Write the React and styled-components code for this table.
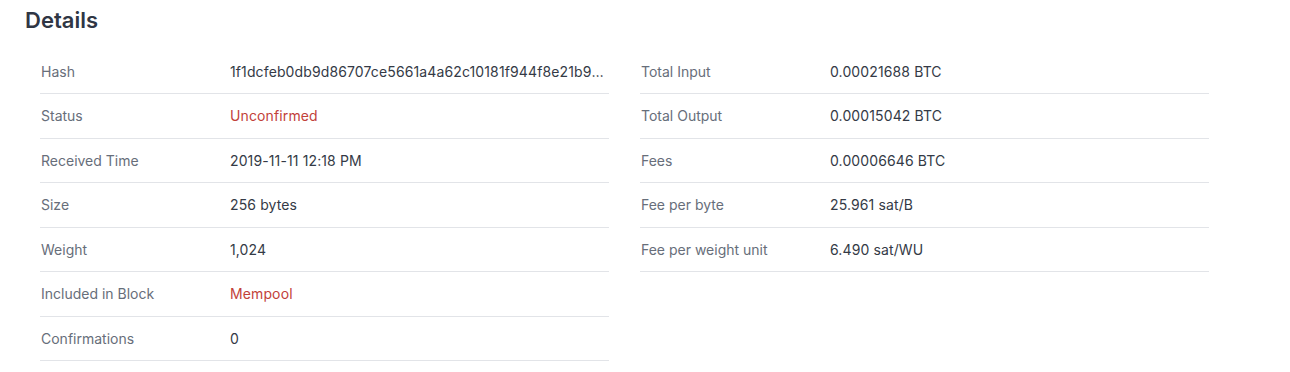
import React from "react";
import styled, { createGlobalStyle } from "styled-components";

const Global = createGlobalStyle`
  html, body { margin: 0; padding: 0; background: #ffffff; }
  body { font-family: Inter, "Noto Sans", sans-serif; }
`;

const Page = styled.div`
  padding: 7px 0 0 25px;
  width: 1265px;
  box-sizing: border-box;
`;

const Title = styled.h2`
  margin: 0;
  font-size: 22px;
  line-height: 26px;
  font-weight: 600;
  color: #2f3644;
`;

const Columns = styled.div`
  display: grid;
  grid-template-columns: 569px 569px;
  column-gap: 31px;
  margin: 16.5px 0 0 15px;
  align-items: start;
`;

const Table = styled.div`
  display: flex;
  flex-direction: column;
`;

const Row = styled.div`
  display: grid;
  grid-template-columns: 190px minmax(0, 1fr);
  padding: 12px 0;
  line-height: 19.5px;
  font-size: 14px;
  border-bottom: 1px solid #e2e4e8;
`;

const Label = styled.div`
  color: #676e7a;
  padding-left: 1px;
  white-space: nowrap;
`;

const Value = styled.div`
  color: ${(p) => (p.$alert ? "#c2413a" : "#343a46")};
  letter-spacing: 0.12px;
  white-space: nowrap;
  overflow: hidden;
  text-overflow: ellipsis;
  padding-right: 3px;
  min-width: 0;
`;

const left = [
  ["Hash", "1f1dcfeb0db9d86707ce5661a4a62c10181f944f8e21b9a6cbd2fc3f9e6a7b3d"],
  ["Status", "Unconfirmed", true],
  ["Received Time", "2019-11-11 12:18 PM"],
  ["Size", "256 bytes"],
  ["Weight", "1,024"],
  ["Included in Block", "Mempool", true],
  ["Confirmations", "0"],
];

const right = [
  ["Total Input", "0.00021688 BTC"],
  ["Total Output", "0.00015042 BTC"],
  ["Fees", "0.00006646 BTC"],
  ["Fee per byte", "25.961 sat/B"],
  ["Fee per weight unit", "6.490 sat/WU"],
];

function DetailTable({ rows }) {
  return (
    <Table>
      {rows.map(([k, v, alert]) => (
        <Row key={k}>
          <Label>{k}</Label>
          <Value $alert={alert}>{v}</Value>
        </Row>
      ))}
    </Table>
  );
}

export default function App() {
  return (
    <>
      <Global />
      <Page>
        <Title>Details</Title>
        <Columns>
          <DetailTable rows={left} />
          <DetailTable rows={right} />
        </Columns>
      </Page>
    </>
  );
}
